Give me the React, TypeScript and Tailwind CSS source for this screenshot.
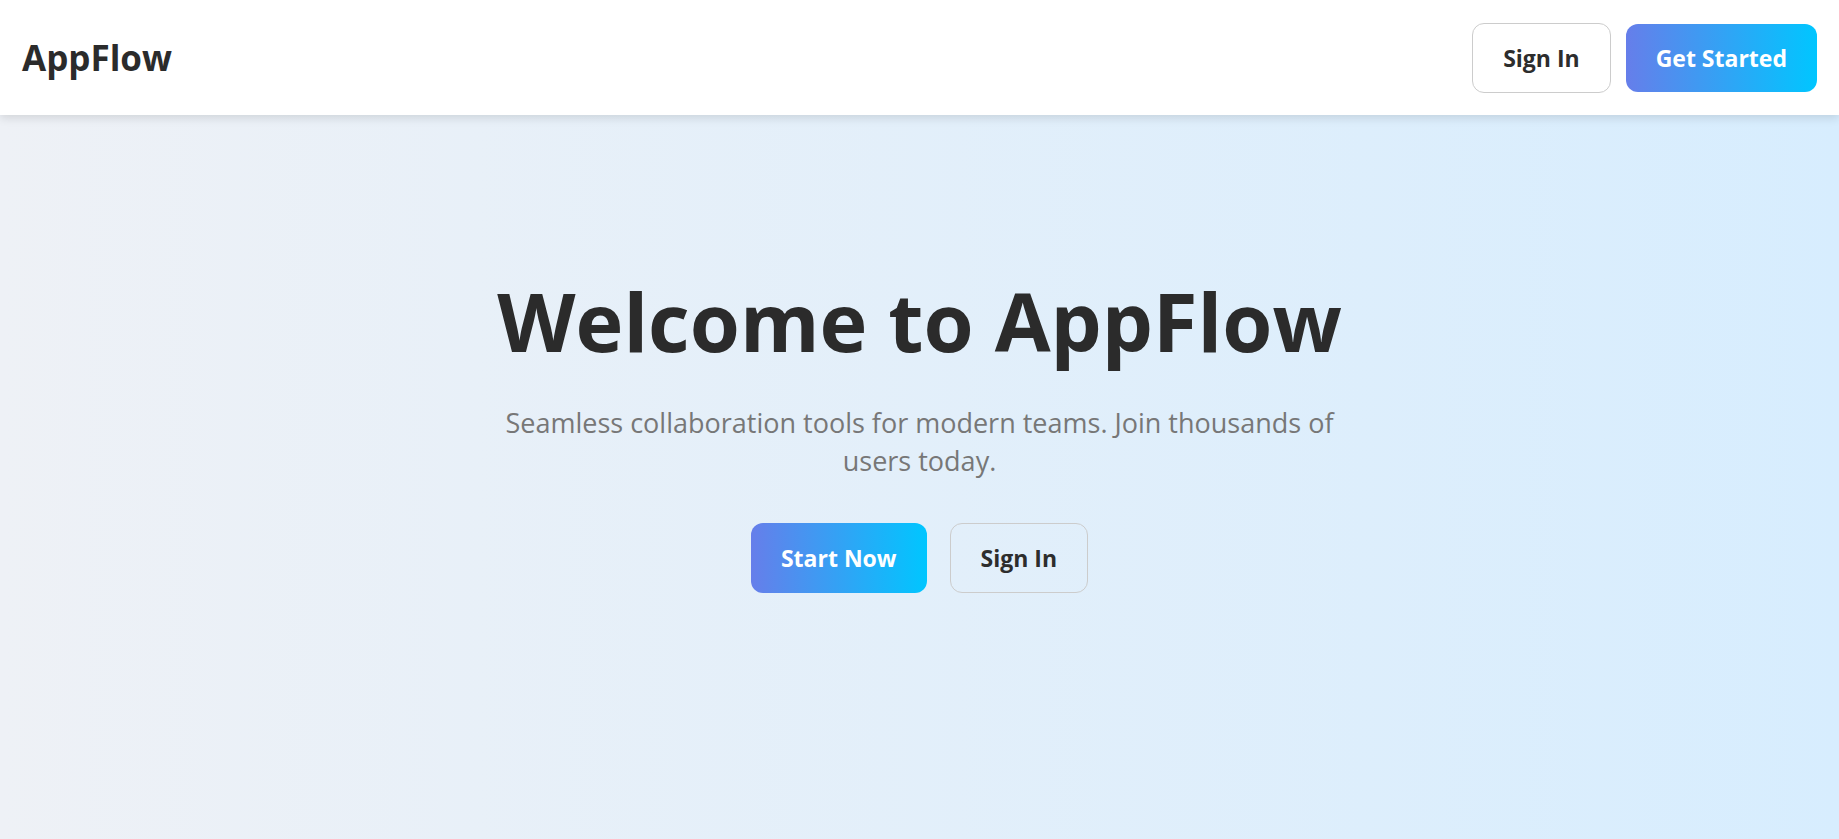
const outline =
  "flex min-h-[70px] items-center justify-center rounded-xl border border-[#cccccc] bg-transparent px-[30px] text-[23px] leading-8 font-bold text-[#2d2d2d]";
const solid =
  "flex min-h-[68px] items-center justify-center rounded-xl bg-linear-to-r/srgb from-[#667eea] to-[#00c6ff] px-[30px] text-[23px] leading-8 font-bold text-white";

export default function App() {
  return (
    <div className="flex min-h-screen flex-col bg-linear-to-r/srgb from-[#eef1f6] to-[#d7edfe] font-['Open_Sans','Noto_Sans',sans-serif] text-[#2b2b2b]">
      <header className="flex items-center justify-between bg-white px-[22px] pt-[23px] pb-[22px] shadow-[0_3px_9px_rgba(0,0,0,0.12)]">
        <div className="text-[35px] leading-[48px] font-bold">AppFlow</div>
        <nav className="flex items-center gap-[15px]">
          <button type="button" className={outline}>Sign In</button>
          <button type="button" className={solid}>Get Started</button>
        </nav>
      </header>
      <main className="flex flex-1 flex-col items-center px-6 pt-[150px] text-center">
        <h1 className="text-[81px] leading-[112px] font-bold">Welcome to AppFlow</h1>
        <p className="mt-[27px] max-w-[860px] text-[27px] leading-[38px] text-[#777777]">
          Seamless collaboration tools for modern teams. Join thousands of users today.
        </p>
        <div className="mt-[43px] flex items-stretch gap-[23px]">
          <button type="button" className={solid}>Start Now</button>
          <button type="button" className={outline}>Sign In</button>
        </div>
      </main>
    </div>
  );
}
